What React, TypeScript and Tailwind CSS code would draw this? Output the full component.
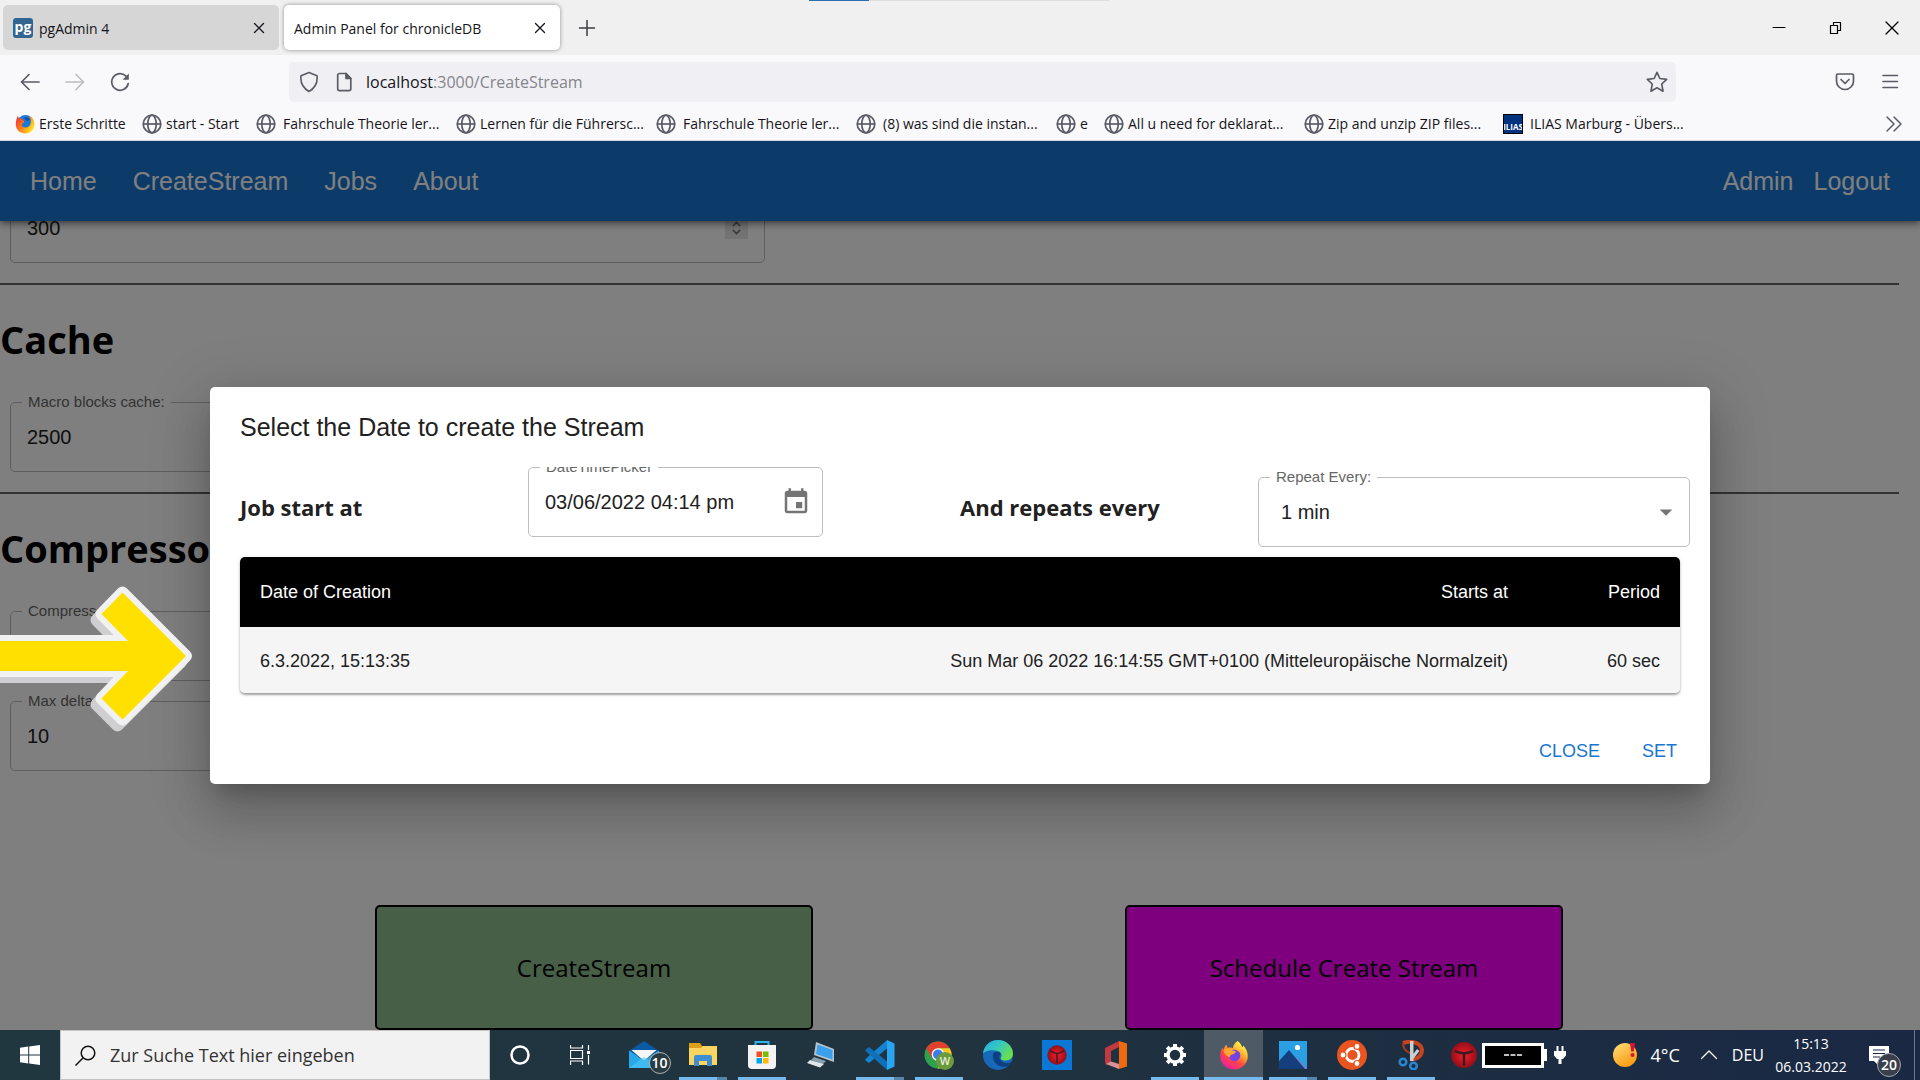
import React, { type ReactNode } from "react";

const UI = "font-['Open_Sans','Noto_Sans',sans-serif]";

/* ---------- small line icons ---------- */

function Line({ size = 20, d, w = 1, cls = "", box = 20 }: { size?: number; d: string; w?: number; cls?: string; box?: number }) {
  return (
    <svg width={size} height={size} viewBox={`0 0 ${box} ${box}`} fill="none" stroke="currentColor" strokeWidth={w} strokeLinecap="round" strokeLinejoin="round" className={cls} aria-hidden="true">
      <path d={d} />
    </svg>
  );
}

function Globe() {
  return (
    <svg width="20" height="20" viewBox="0 0 20 20" fill="none" stroke="#5b5b66" strokeWidth="1.7" className="shrink-0" aria-hidden="true">
      <circle cx="10" cy="10" r="8.8" />
      <ellipse cx="10" cy="10" rx="4.2" ry="8.8" />
      <path d="M1.2 10h17.6" />
    </svg>
  );
}

function FirefoxLogo({ size, id }: { size: number; id: string }) {
  return (
    <svg width={size} height={size} viewBox="0 0 30 30" className="shrink-0" aria-hidden="true">
      <defs>
        <linearGradient id={id} x1="0.85" y1="0.05" x2="0.25" y2="0.95">
          <stop offset="0.1" stopColor="#fff04a" />
          <stop offset="0.4" stopColor="#ffa32b" />
          <stop offset="0.65" stopColor="#ff4545" />
          <stop offset="1" stopColor="#f0209b" />
        </linearGradient>
      </defs>
      <path fill={`url(#${id})`} d="M18.5 1c3 2 4.300 4.300 4.500 6.300 1-.2 1.200-1 1.300-1.800 2.500 2.600 4.500 6.500 4.500 10.500A13.800 13.300 0 0 1 15 29.300 13.800 13.300 0 0 1 1.200 16c0-3.500 1-6.500 2.300-8.300l.9 2.200C5.200 7.500 6 5.800 7.600 4.500c0 1.700.5 2.800 1.300 3.400 2-.5 3.600-.3 5 .3C14 5.500 16 2.500 18.500 1z" />
      <path fill="#7542e5" d="M11 11.500c3-2.500 6-2.200 8.500-.2 2.500 2.500 2.500 6-.2 8.500-3 2.300-7 1.500-8.600-1.500-.8-2 .2-3.300 2-3.600 1.600-.2 2.600-.8 2.700-2-1.600 0-2.900-.4-4.400-1.200z" />
      <path fill="#ffb02e" d="M4.500 10c3-2.500 6.500-2 8.800.3 1.300.4 3 .5 3.700 1.100-.8 1.900-2.300 2.300-4.200 2.800-1.500.5-2 1.600-1.600 3.100C8 17 5 14 4.500 10z" opacity=".85" />
    </svg>
  );
}

function FirefoxOld() {
  return (
    <svg width="20" height="20" viewBox="0 0 20 20" className="shrink-0" aria-hidden="true">
      <defs>
        <linearGradient id="ffo" x1="0" y1="0" x2="1" y2="0.6">
          <stop offset="0" stopColor="#f5263f" />
          <stop offset="0.5" stopColor="#ff7a14" />
          <stop offset="1" stopColor="#ffe226" />
        </linearGradient>
      </defs>
      <circle cx="10.500" cy="9" r="8" fill="#1b78d6" />
      <path d="M9 4c2-1 5 0 6 2l-3 1z" fill="#0d4fa0" />
      <path fill="url(#ffo)" d="M3 1.500c0 1.500.5 2.300 1.200 2.700C5.500 4 7 4.500 8 6l1.300 1.500c-.2 1.300-1.200 1.700-2 2.200-.8.800-.6 2 .2 2.800 2.300 1.700 6.300 1.200 7.700-1.700C16.500 8 16 4.500 13.500 1.500c3.500 1.300 6 4.500 6 9 0 5-4 9-9.300 9C5 19.500.8 15.500.8 10.500.8 7 1.700 3.800 3 1.500z" />
    </svg>
  );
}

/* ---------- browser chrome ---------- */

const BOOKMARKS = [
  { label: "Erste Schritte", kind: "ff", width: "w-[127px]", gap: "gap-1" },
  { label: "start - Start", kind: "globe", width: "w-[114px]", gap: "gap-1" },
  { label: "Fahrschule Theorie ler...", kind: "globe", width: "w-[200px]", gap: "gap-[7px]" },
  { label: "Lernen für die Führersc...", kind: "globe", width: "w-[200px]", gap: "gap-1" },
  { label: "Fahrschule Theorie ler...", kind: "globe", width: "w-[200px]", gap: "gap-[7px]" },
  { label: "(8) was sind die instan...", kind: "globe", width: "w-[200px]", gap: "gap-[7px]" },
  { label: "e", kind: "globe", width: "w-[48px]", gap: "gap-1" },
  { label: "All u need for deklarat...", kind: "globe", width: "w-[200px]", gap: "gap-1" },
  { label: "Zip and unzip ZIP files...", kind: "globe", width: "w-[199px]", gap: "gap-1" },
  { label: "ILIAS Marburg - Übers...", kind: "ilias", width: "w-[200px]", gap: "gap-[7px]" },
];

function Tab({ title, active, icon }: { title: string; active?: boolean; icon?: ReactNode }) {
  return (
    <div className={`flex h-[45px] w-[276px] items-center gap-[6px] rounded-[5px] pl-[10px] pr-3 ${active ? "bg-white shadow-[0_0_4px_rgba(0,0,0,0.4)]" : "bg-[#d6d6d6]"}`}>
      {icon}
      <span className="flex-1 whitespace-nowrap pt-0.5 text-sm text-[#15141a]">{title}</span>
      <button aria-label={`${title} schließen`} className="text-[#15141a]">
        <Line size={16} box={16} d="M3.500 3.500l9 9M12.500 3.500l-9 9" w={1.300} />
      </button>
    </div>
  );
}

function BrowserChrome() {
  return (
    <header className={`shrink-0 ${UI}`}>
      <div className="flex h-[55px] items-center bg-[#f0f0f0] pl-[3px]">
        <div className="flex gap-[5px]">
          <Tab
            title="pgAdmin 4"
            icon={<span className="flex size-5 items-center justify-center rounded-[3px] bg-[#326690] pb-0.5 text-sm font-bold leading-none text-white">pg</span>}
          />
          <Tab title="Admin Panel for chronicleDB" active />
        </div>
        <button aria-label="Neuer Tab" className="ml-[17px] text-[#3b3b40]">
          <Line size={20} d="M10 2.500v15M2.500 10h15" w={1.500} />
        </button>
        <div className="flex h-full flex-1 items-start pl-[212px]">
          <div className="h-px w-[60px] bg-[#2d70b0]" />
          <div className="h-px w-[240px] bg-[#dedede]" />
        </div>
        <div className="flex items-center pr-[20px] text-black">
          <button aria-label="Minimieren" className="w-[57px]"><Line size={16} box={16} d="M2 7.500h12" w={1.200} /></button>
          <button aria-label="Verkleinern" className="w-[56px]"><Line size={16} box={16} d="M2.500 5.500h7v8h-7zM5.500 5.500v-3h7v8h-3" w={1.200} /></button>
          <button aria-label="Schließen"><Line size={16} box={16} d="M2 2l12 12M14 2l-12 12" w={1.300} /></button>
        </div>
      </div>

      <div className="flex h-[53px] items-center bg-[#f9f9fb] text-[#5b5b66]">
        <div className="flex w-[289px] items-center gap-[25px] pl-5">
          <button aria-label="Zurück"><Line d="M19 10H1.500M9 2.500L1.500 10 9 17.500" w={1.700} /></button>
          <button aria-label="Vor" className="text-[#bdbdc2]"><Line d="M1 10h17.500M11 2.500l7.500 7.500-7.500 7.500" w={1.700} /></button>
          <button aria-label="Neu laden">
            <svg width="20" height="20" viewBox="0 0 20 20" fill="none" stroke="currentColor" strokeWidth="1.700" strokeLinecap="round" aria-hidden="true">
              <path d="M18.200 11.500A8.300 8.300 0 1 1 16 4.200" />
              <path d="M18.800 1.500v6.200h-6.200z" fill="currentColor" stroke="none" />
            </svg>
          </button>
        </div>
        <div className="flex h-10 flex-1 items-center rounded-[5px] bg-[#f0f0f4] pl-[10px] pr-2">
          <svg width="20" height="22" viewBox="0 0 20 22" fill="none" stroke="currentColor" strokeWidth="1.600" strokeLinejoin="round" aria-hidden="true">
            <path d="M10 1.500l8 3.200c.8 6.500-1.500 12-8 15.800C3.500 16.700 1.200 11.200 2 4.700z" />
          </svg>
          <svg width="16" height="20" viewBox="0 0 16 20" fill="none" stroke="currentColor" strokeWidth="1.700" strokeLinejoin="round" className="ml-[17px]" aria-hidden="true">
            <path d="M3.500 1.500H10L14.800 6.500v10.300a1.800 1.800 0 0 1-1.800 1.800H3.500a1.800 1.800 0 0 1-1.800-1.800V3.300a1.800 1.800 0 0 1 1.800-1.800z" />
            <path d="M10 1.500v5h4.800z" fill="currentColor" />
          </svg>
          <div className="ml-[14px] flex-1 whitespace-nowrap text-base text-[#15141a]">
            localhost<span className="text-[#85858c]">:3000/CreateStream</span>
          </div>
          <button aria-label="Lesezeichen hinzufügen">
            <Line size={22} d="M10 1.200l2.600 5.600 6.200.8-4.500 4.200 1.200 6.600L10 15.300l-5.500 3.100 1.200-6.600L1.200 7.600l6.200-.8z" w={1.500} />
          </button>
        </div>
        <div className="flex w-[244px] items-center justify-end gap-[25px] pr-5">
          <button aria-label="Pocket">
            <svg width="20" height="20" viewBox="0 0 20 20" fill="none" stroke="currentColor" strokeWidth="1.700" strokeLinecap="round" strokeLinejoin="round" aria-hidden="true">
              <path d="M3 2h14a1.500 1.500 0 0 1 1.500 1.500V9a8.500 8.500 0 0 1-17 0V3.500A1.500 1.500 0 0 1 3 2z" />
              <path d="M6 7.500l4 4 4-4" />
            </svg>
          </button>
          <button aria-label="Menü"><Line d="M3 3.500h14.500M3 9.500h14.500M3 15.500h14.500" w={1.600} /></button>
        </div>
      </div>

      <nav aria-label="Lesezeichen" className="flex h-[33px] items-center border-b border-[#cfd4de] bg-[#f9f9fb] pb-px pl-[15px] pr-4 text-sm text-[#15141a]">
        {BOOKMARKS.map((b, i) => (
          <a key={i} href="#" className={`flex shrink-0 items-center whitespace-nowrap ${b.width} ${b.gap}`}>
            {b.kind === "ff" && <FirefoxOld />}
            {b.kind === "globe" && <Globe />}
            {b.kind === "ilias" && (
              <span className="flex size-5 shrink-0 items-end justify-center overflow-hidden border border-black bg-[#00327f] text-[8px] font-bold leading-3 text-white">ILIAS</span>
            )}
            {b.label}
          </a>
        ))}
        <button aria-label="Weitere Lesezeichen" className="ml-auto text-[#5b5b66]">
          <Line d="M3 3l7 7-7 7M10 3l7 7-7 7" w={1.500} />
        </button>
      </nav>
    </header>
  );
}

/* ---------- page behind the dialog ---------- */

function Field({ id, label, name, value, spinner }: { id: string; label?: string; name?: string; value: string; spinner?: boolean }) {
  return (
    <div className="relative ml-[10px] flex h-[70px] w-[755px] items-center rounded-[5px] border border-[#bdbdbd] pl-4 pr-4">
      {label && (
        <label htmlFor={id} className="absolute -top-[9px] left-[11px] bg-white px-[6px] text-[15px] leading-4 text-[#666666]">{label}</label>
      )}
      <input id={id} aria-label={name} defaultValue={value} className="min-w-0 flex-1 bg-transparent text-xl text-[#212121] outline-none" />
      {spinner && (
        <span className="flex h-[22px] w-[23px] flex-col items-center justify-between bg-[#e6e6e6] py-[3px] text-[#777777]">
          <Line size={9} box={10} d="M1 7l4-4 4 4" w={2} />
          <Line size={9} box={10} d="M1 3l4 4 4-4" w={2} />
        </span>
      )}
    </div>
  );
}

function Heading({ children }: { children: ReactNode }) {
  return <h1 className={`mb-[33px] mt-6 text-[38px] font-bold leading-[60px] text-black ${UI}`}>{children}</h1>;
}

const Rule = () => <hr className="mr-[21px] mt-5 h-0.5 border-0 bg-[#666666]" />;

function Page() {
  const big = "h-[125px] w-[438px] rounded-[5px] border-2 border-black text-2xl text-black";
  return (
    <>
      <nav className="relative z-10 flex h-20 items-center bg-[#1976d2] px-[30px] pt-0.5 text-[25px] text-white shadow-[0_2px_8px_rgba(0,0,0,0.6)]">
        <div className="flex gap-9">
          <a href="#">Home</a>
          <a href="#">CreateStream</a>
          <a href="#">Jobs</a>
          <a href="#">About</a>
        </div>
        <div className="ml-auto flex gap-5">
          <a href="#">Admin</a>
          <a href="#">Logout</a>
        </div>
      </nav>
      <div className="-mt-7">
        <Field id="size" name="Size" value="300" spinner />
        <Rule />
        <Heading>Cache</Heading>
        <Field id="macro" label="Macro blocks cache:" value="2500" />
        <Rule />
        <Heading>Compressor</Heading>
        <Field id="compressor" label="Compressor:" value="" />
        <div className="h-5" />
        <Field id="delta" label="Max delta value:" value="10" />
        <div className={`ml-[219px] mr-[201px] mt-[134px] grid grid-cols-2 justify-items-center ${UI}`}>
          <button className={`${big} bg-[#8fbc8f]`}>CreateStream</button>
          <button className={`${big} bg-[#ff00ff]`}>Schedule Create Stream</button>
        </div>
      </div>
    </>
  );
}

/* ---------- dialog ---------- */

function ScheduleDialog() {
  return (
    <div role="dialog" aria-labelledby="dlg-title" className="w-full max-w-[1500px] rounded-[5px] bg-white text-[#212121] shadow-[0_14px_19px_-9px_rgba(0,0,0,0.2),0_30px_48px_4px_rgba(0,0,0,0.14),0_11px_58px_10px_rgba(0,0,0,0.12)]">
      <h2 id="dlg-title" className="px-[30px] py-5 text-[25px] leading-10">Select the Date to create the Stream</h2>
      <div className="overflow-hidden px-[30px] pb-5">
        <div className="grid grid-cols-[2fr_3fr_2fr_3fr] items-start">
          <div className={`pt-[25px] text-[22px] font-bold leading-[30px] ${UI}`}>Job start at</div>
          <div className="relative flex h-[70px] w-[295px] items-center rounded-[5px] border border-[#bdbdbd] pl-4 pr-[11px]">
            <label htmlFor="dt" className="absolute -top-[9px] left-[11px] bg-white px-[6px] text-[15px] leading-4 text-[#666666]">DateTimePicker</label>
            <input id="dt" defaultValue="03/06/2022 04:14 pm" className="min-w-0 flex-1 bg-transparent text-xl outline-none" />
            <button aria-label="Choose date" className="text-[#757575]">
              <svg width="30" height="30" viewBox="0 0 24 24" fill="currentColor" aria-hidden="true">
                <path d="M17 12h-5v5h5v-5zM16 1v2H8V1H6v2H5c-1.110 0-1.990.9-1.990 2L3 19c0 1.100.890 2 2 2h14c1.100 0 2-.9 2-2V5c0-1.100-.9-2-2-2h-1V1h-2zm3 18H5V8h14v11z" />
              </svg>
            </button>
          </div>
          <div className={`pt-[25px] text-[22px] font-bold leading-[30px] ${UI}`}>And repeats every</div>
          <div className="-mr-[10px] ml-[10px] py-[10px]">
            <div className="relative flex h-[70px] items-center rounded-[5px] border border-[#bdbdbd]">
              <label htmlFor="rep" className="absolute -top-[9px] left-[11px] bg-white px-[6px] text-[15px] leading-4 text-[#666666]">Repeat Every:</label>
              <select id="rep" className="h-full w-full appearance-none bg-transparent pl-[22px] text-xl outline-none">
                <option>1 min</option>
              </select>
              <svg width="30" height="30" viewBox="0 0 24 24" fill="#757575" className="pointer-events-none absolute right-2" aria-hidden="true">
                <path d="M7 10l5 5 5-5z" />
              </svg>
            </div>
          </div>
        </div>
        <div className="overflow-hidden rounded-[5px] shadow-[0_2px_2px_rgba(0,0,0,0.3),0_1px_4px_rgba(0,0,0,0.12)]">
          <table className="w-full text-lg">
            <thead className="bg-black text-white">
              <tr className="h-[70px]">
                <th className="px-5 text-left font-normal">Date of Creation</th>
                <th className="px-5 text-right font-normal">Starts at</th>
                <th className="w-[152px] px-5 text-right font-normal">Period</th>
              </tr>
            </thead>
            <tbody className="bg-[#f5f5f5]">
              <tr className="h-[66px]">
                <td className="px-5 pt-0.5">6.3.2022, 15:13:35</td>
                <td className="px-5 pt-0.5 text-right">Sun Mar 06 2022 16:14:55 GMT+0100 (Mitteleuropäische Normalzeit)</td>
                <td className="px-5 pt-0.5 text-right">60 sec</td>
              </tr>
            </tbody>
          </table>
        </div>
      </div>
      <div className="flex justify-end gap-[42px] pb-[15px] pr-[33px] pt-5 text-lg leading-9 text-[#1976d2]">
        <button>CLOSE</button>
        <button>SET</button>
      </div>
    </div>
  );
}

function Arrow() {
  const d = "M-20 55H128L101.500 28 122.500 6.500 186 70 122.500 133.500 101.500 112.500 128 85H-20z";
  return (
    <svg width="200" height="152" viewBox="0 0 200 152" className="pointer-events-none absolute left-0 top-[445px]" aria-hidden="true">
      <g strokeLinejoin="round" strokeWidth="12">
        <path d={d} fill="#cfcfd2" stroke="#cfcfd2" transform="translate(-5 6)" />
        <path d={d} fill="#ffe000" stroke="#f1f1f1" />
        <path d={d} fill="#ffe000" />
      </g>
    </svg>
  );
}

/* ---------- taskbar ---------- */

const Svg = ({ children, box = "0 0 30 30", w = 30, h = 30 }: { children: ReactNode; box?: string; w?: number; h?: number }) => (
  <svg width={w} height={h} viewBox={box} aria-hidden="true">{children}</svg>
);

const MailIcon = (
  <span className="relative">
    <Svg>
      <path d="M0 11L15 1l15 10v5H0z" fill="#0c59a4" />
      <path d="M2.500 10h25L15 21z" fill="#f4f6f8" />
      <path d="M0 10.500l15 10L30 10.500V28H0z" fill="#28a8ea" />
      <path d="M0 28l15-11 15 11z" fill="#50c8f5" opacity=".6" />
    </Svg>
    <span className="absolute -right-3 top-3 flex size-[22px] items-center justify-center rounded-full border border-[#a9b2b6] bg-[#2a3a41] text-sm font-semibold leading-none text-white">10</span>
  </span>
);
const ExplorerIcon = (
  <Svg>
    <path d="M1 3h11l2 3h13a2 2 0 0 1 2 2v17H1z" fill="#dd9f17" />
    <path d="M1 8h12l2-2h14v19H1z" fill="#fcd462" />
    <path d="M6 26v-9a2 2 0 0 1 2-2h14a2 2 0 0 1 2 2v9h-5v-5h-8v5z" fill="#3f8fd0" />
  </Svg>
);
const StoreIcon = (
  <Svg>
    <path d="M8.500 6V2h13v4" fill="none" stroke="#2cb4e8" strokeWidth="2" />
    <path d="M1 5h28v20a4 4 0 0 1-4 4H5a4 4 0 0 1-4-4z" fill="#f3f3f3" />
    <path d="M9.500 11.500H15V17H9.500z" fill="#f25022" />
    <path d="M16 11.500h5.500V17H16z" fill="#7fba00" />
    <path d="M9.500 18H15v5.500H9.500z" fill="#00a4ef" />
    <path d="M16 18h5.500v5.500H16z" fill="#ffb900" />
  </Svg>
);
const RemoteIcon = (
  <Svg>
    <path d="M10 2l18 7v13L8 15z" fill="#b6c3cc" />
    <path d="M11.500 4.500L26.500 10v9.500L10 14z" fill="#3aa0ee" />
    <path d="M8 17l12 4-3 3-12-4z" fill="#8ba0ad" />
    <path d="M4 20l14 4-4 3.500L1 23z" fill="#dfe6ea" />
  </Svg>
);
const CodeIcon = (
  <Svg>
    <path d="M22 0l7.500 3.500v23L22 30z" fill="#2aa5f2" />
    <path d="M22 0v8.500L4 23l-3.500-2.500v-1.500z" fill="#1583d1" />
    <path d="M22 30v-8.500L4 7 .5 9.500V11z" fill="#0f6fb8" />
  </Svg>
);
const ChromeIcon = (
  <Svg>
    <circle cx="14" cy="15" r="13.500" fill="#2fa04b" />
    <path d="M2.300 8.200A13.500 13.500 0 0 1 25.700 8.200H14L8 18z" fill="#e2402e" />
    <path d="M25.700 8.200A13.500 13.500 0 0 1 13.500 28.500L20 18 14 8.200z" fill="#fbc625" />
    <circle cx="14" cy="14.500" r="6.300" fill="#fff" />
    <circle cx="14" cy="14.500" r="5" fill="#3d7be8" />
    <circle cx="21" cy="21" r="9" fill="#6a9b3c" />
    <text x="21" y="25" fontSize="11" fontWeight="600" fill="#e9efdf" textAnchor="middle">W</text>
  </Svg>
);
const EdgeIcon = (
  <Svg>
    <defs>
      <linearGradient id="edgeA" x1="0" y1="0" x2="1" y2="0.6">
        <stop offset="0" stopColor="#25a8e0" />
        <stop offset="0.5" stopColor="#35c8c0" />
        <stop offset="1" stopColor="#6be04a" />
      </linearGradient>
    </defs>
    <circle cx="15" cy="15" r="15" fill="#1669b8" />
    <path d="M0 14C.5 6 7 0 15 0s15 6 15 13.500c0 4-3 7-7 7-4.500 0-6-1.500-5-3 1.500-2 .5-5.500-3.500-6.500C9 9.500 2 10.500 0 14z" fill="url(#edgeA)" />
    <path d="M10 14c-1 8 5 14 13 12.500 3-.8 4.500-2.500 5.500-4.500-4 2-10 1-12-3.500-.8-2 .5-4 1.500-5-2.500-2.500-7-2-8 .5z" fill="#0f3f83" />
  </Svg>
);
const TBall = ({ size, square }: { size: number; square?: boolean }) => (
  <Svg w={size} h={size}>
    <defs>
      <radialGradient id="ball">
        <stop offset="0.3" stopColor="#dd1826" />
        <stop offset="1" stopColor="#8f1018" />
      </radialGradient>
    </defs>
    {square && <path d="M0 0h30v30H0z" fill="#0a78d6" />}
    <circle cx="15" cy="15" r={square ? 9.700 : 15} fill="url(#ball)" />
    <path
      d={square ? "M8 10.500c3 2.500 5 3 7 3s4-.5 7-3M15 13.500V23" : "M4.500 10.500C9 12.500 12 13 15 13s6-.5 10.500-2.500M15 13v14"}
      fill="none"
      stroke="#3a1c20"
      strokeWidth={square ? 1.500 : 2.800}
    />
  </Svg>
);
const OfficeIcon = (
  <Svg>
    <path d="M4 8L18 1v6l-8 4v11l-5 3-1-3z" fill="#c03a3f" />
    <path d="M18 1l8 2.500v23L18 29z" fill="#ee6a10" />
    <path d="M5 24l5-2.500L18 24v5z" fill="#d9929a" />
  </Svg>
);
const GearIcon = (
  <Svg>
    <g fill="none" stroke="#fff">
      <circle cx="15" cy="15" r="7" strokeWidth="3.500" />
      <path d="M15 4v4M15 22v4M4 15h4M22 15h4M7.200 7.200l3 3M19.800 19.800l3 3M22.800 7.200l-3 3M10.200 19.800l-3 3" strokeWidth="4" />
    </g>
  </Svg>
);
const PhotosIcon = (
  <Svg>
    <path d="M1 1h28v28H1z" fill="#2a9fe4" />
    <path d="M14 29l5-12 10 11v1z" fill="#6c84d8" />
    <path d="M1 21L11 10l16 19H1z" fill="#143f7c" />
    <circle cx="19.500" cy="7.500" r="2.600" fill="#fff" />
  </Svg>
);
const UbuntuIcon = (
  <Svg>
    <circle cx="15" cy="15" r="15" fill="#e95420" />
    <circle cx="15.500" cy="15" r="6.500" fill="none" stroke="#fff" strokeWidth="2.800" />
    <g fill="#fff" stroke="#e95420" strokeWidth="1.200">
      <circle cx="6" cy="15" r="3" />
      <circle cx="20" cy="6.500" r="3" />
      <circle cx="20" cy="23.500" r="3" />
    </g>
  </Svg>
);
const SnipIcon = (
  <Svg>
    <path d="M7 3c9-3 19 0 19 8-1 6-6 9-12 8" fill="none" stroke="#c9441c" strokeWidth="4" />
    <path d="M7 3c0 5 2 8 7 10" fill="none" stroke="#a83a18" strokeWidth="2" />
    <path d="M14 1h3.500v20H14zM21 9l2.500 2-7 9-2-2z" fill="#c9ced2" />
    <circle cx="7" cy="22" r="3.300" fill="none" stroke="#2b86d2" strokeWidth="2.500" />
    <circle cx="17.500" cy="26" r="3.300" fill="none" stroke="#2b86d2" strokeWidth="2.500" />
  </Svg>
);

const APPS: { name: string; icon: ReactNode; run?: "one" | "many" | "active" }[] = [
  { name: "Mail", icon: MailIcon },
  { name: "Explorer", icon: ExplorerIcon, run: "many" },
  { name: "Store", icon: StoreIcon, run: "one" },
  { name: "Remote", icon: RemoteIcon },
  { name: "Code", icon: CodeIcon, run: "many" },
  { name: "Chrome", icon: ChromeIcon, run: "one" },
  { name: "Edge", icon: EdgeIcon },
  { name: "Trainer", icon: <TBall size={30} square /> },
  { name: "Office", icon: OfficeIcon },
  { name: "Einstellungen", icon: GearIcon, run: "one" },
  { name: "Firefox", icon: <FirefoxLogo size={30} id="fft" />, run: "active" },
  { name: "Fotos", icon: PhotosIcon, run: "many" },
  { name: "Ubuntu", icon: UbuntuIcon, run: "one" },
  { name: "Snip", icon: SnipIcon, run: "one" },
];

function Taskbar() {
  return (
    <footer className={`flex h-[50px] shrink-0 items-center bg-linear-to-r from-[#213740] via-[#20333f] to-[#1a2844] text-white ${UI}`}>
      <button aria-label="Start" className="flex h-full w-[60px] items-center justify-center">
        <Svg w={20} h={20} box="0 0 20 20">
          <path d="M0 2.800l8.200-1.200v7.900H0zM9.200 1.400L20 0v9.500H9.200zM0 10.500h8.200v7.900L0 17.200zM9.200 10.500H20V20L9.200 18.600z" fill="#fff" />
        </Svg>
      </button>
      <label className="flex h-full w-[430px] items-center border border-[#c4c4c4] bg-[#f2f2f2] pl-[14px] text-[#111]">
        <svg width="21" height="21" viewBox="0 0 21 21" fill="none" stroke="currentColor" strokeWidth="1.500" aria-hidden="true">
          <circle cx="13" cy="8" r="6.800" />
          <path d="M8.200 12.800L.5 20.500" />
        </svg>
        <input aria-label="Suche" placeholder="Zur Suche Text hier eingeben" className="ml-[14px] min-w-0 flex-1 bg-transparent text-lg outline-none placeholder:text-[#333333]" />
      </label>
      <button aria-label="Cortana" className="flex w-[60px] justify-center">
        <Svg w={20} h={20} box="0 0 20 20"><circle cx="10" cy="10" r="8.500" fill="none" stroke="#fff" strokeWidth="2.500" /></Svg>
      </button>
      <button aria-label="Taskansicht" className="flex w-[60px] justify-center">
        <Svg w={20} h={20} box="0 0 20 20">
          <path d="M.5 0v3h12V0M.5 20v-4h12v4M.5 5.500h12v8H.5zM18.500 0v5M18.500 10v9.500" fill="none" stroke="#fff" strokeWidth="1.200" />
          <path d="M17 6h3v3h-3z" fill="#fff" />
        </Svg>
      </button>
      <div className="ml-1 flex h-full">
        {APPS.map((a) => (
          <button key={a.name} aria-label={a.name} className={`flex h-full w-[59px] flex-col items-center ${a.run === "active" ? "bg-[#4e5b66]" : ""}`}>
            <span className="flex flex-1 items-center">{a.icon}</span>
            {a.run === "one" && <span className="-mt-[3px] h-[3px] w-12 bg-[#76b9ed]" />}
            {a.run === "active" && <span className="-mt-[3px] h-[3px] w-full bg-[#76b9ed]" />}
            {a.run === "many" && (
              <span className="-mt-[3px] flex h-[3px] w-12">
                <span className="flex-1 bg-[#76b9ed]" />
                <span className="w-[10px] bg-[#5585ad]" />
              </span>
            )}
          </button>
        ))}
      </div>
      <div className="ml-auto flex h-full items-center">
        <TBall size={26} />
        <span className="ml-[5px] flex h-[25px] w-[62px] items-center justify-center border-[3px] border-white bg-black">
          <Svg w={20} h={4} box="0 0 20 4"><path d="M1 2h5M7.500 2h5M14 2h5" stroke="#fff" strokeWidth="1.300" /></Svg>
        </span>
        <span className="h-3 w-[3px] bg-white" />
        <span className="ml-[7px]">
          <Svg w={12} h={20} box="0 0 12 20">
            <path d="M2.500 1h2v5h3V1h2v5H12v4.500L9 14H7.500v5h-3v-5H3L0 10.500V6h2.500z" fill="#fff" />
          </Svg>
        </span>
        <span className="ml-[46px]">
          <Svg w={26} h={26} box="0 0 26 26">
            <defs>
              <linearGradient id="sun" x1="0" y1="0" x2="0.6" y2="1">
                <stop offset="0" stopColor="#ffe07a" />
                <stop offset="1" stopColor="#f99b12" />
              </linearGradient>
            </defs>
            <circle cx="13" cy="13" r="12" fill="url(#sun)" />
            <path d="M18 1h5l-1.200 8.500h-2.600z" fill="#d8133a" />
            <circle cx="20.500" cy="13" r="2" fill="#d8133a" />
          </Svg>
        </span>
        <span className="ml-3 text-lg">4°C</span>
        <button aria-label="Ausgeblendete Symbole" className="ml-5"><Line size={18} box={18} d="M1.500 12.500L9 5l7.500 7.500" w={1.300} /></button>
        <span className="ml-[14px] text-base">DEU</span>
        <div className="ml-[10px] flex w-[74px] flex-col items-center text-sm leading-[23px]">
          <span>15:13</span>
          <span>06.03.2022</span>
        </div>
        <span className="relative ml-[21px]">
          <Svg w={20} h={20} box="0 0 20 20">
            <path d="M0 1h20v15h-7l-4 4-4-4H0z" fill="#fff" />
            <path d="M4 5h12M4 8.500h12M4 12h7" stroke="#1a2844" strokeWidth="1.200" />
          </Svg>
          <span className="absolute -right-3 top-2 flex size-6 items-center justify-center rounded-full border border-[#a0a5ae] bg-[#3a3f49] text-sm font-semibold leading-none">20</span>
        </span>
        <span className="ml-[25px] h-full w-[6px] border-l border-[#6c7688]" />
      </div>
    </footer>
  );
}

export default function App() {
  return (
    <div className="flex h-screen flex-col overflow-hidden bg-white font-['Liberation_Sans',Arial,sans-serif]">
      <BrowserChrome />
      <main className="relative flex-1 overflow-hidden">
        <Page />
        <div className="absolute inset-0 z-20 flex items-center justify-center bg-black/50">
          <ScheduleDialog />
        </div>
        <div className="pointer-events-none absolute inset-0 z-30 overflow-hidden">
          <Arrow />
        </div>
      </main>
      <Taskbar />
    </div>
  );
}
